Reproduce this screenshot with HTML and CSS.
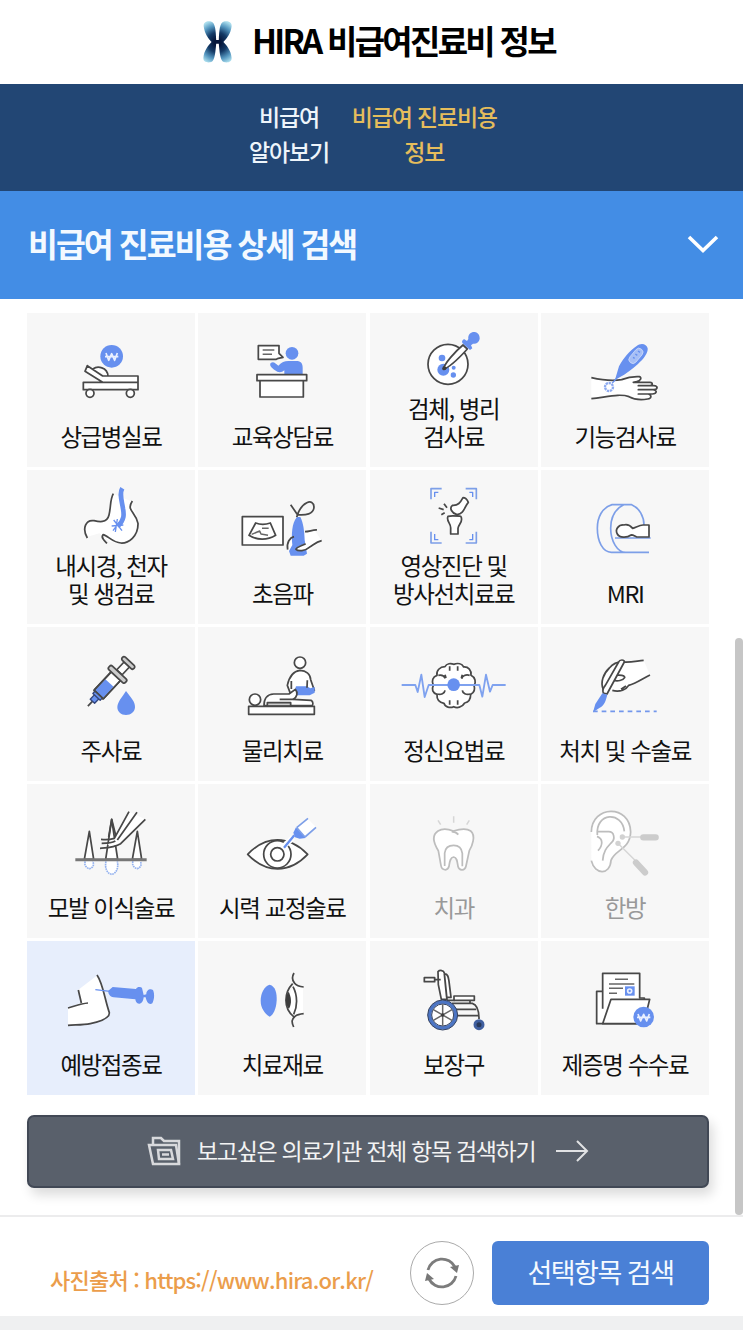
FILE: index.html
```html
<!DOCTYPE html>
<html lang="ko">
<head>
  <meta charset="UTF-8">
  <title>HIRA 비급여진료비 정보</title>
  <link rel="stylesheet" href="styles.css">
</head>
<body>
  <header class="header">
    <svg class="logo" viewBox="66 60 94 134">
      <defs>
        <radialGradient id="wing" gradientUnits="userSpaceOnUse" cx="113" cy="128" r="68">
          <stop offset="0.15" stop-color="#06163a"/>
          <stop offset="0.45" stop-color="#143a66"/>
          <stop offset="0.75" stop-color="#5496bf"/>
          <stop offset="1" stop-color="#a9dcec"/>
        </radialGradient>
      </defs>
      <g fill="url(#wing)">
        <path d="M71 80C69 65 84 62 95 65C106 69 108 92 109 121H117C118 92 120 69 131 65C142 62 158 65 156 80C153 102 142 116 131 127C142 139 154 153 156 175C157 189 143 191 132 188C121 184 119 155 117 132H109C107 155 105 184 94 188C83 191 69 189 70 175C72 153 84 139 95 127C84 116 74 102 71 80Z"/>
      </g>
    </svg>
    <h1 class="title">HIRA 비급여진료비 정보</h1>
  </header>

  <nav class="nav">
    <a class="nav-item">비급여<br>알아보기</a>
    <a class="nav-item active">비급여 진료비용<br>정보</a>
  </nav>

  <div class="banner">
    <h2 class="banner-title">비급여 진료비용 상세 검색</h2>
    <svg class="chevron" viewBox="0 0 32 20"><path d="M2 3L16 16.500L30 3"/></svg>
  </div>

  <main class="content">
    <div class="grid">
      <div class="cell">
        <svg class="icon" viewBox="21 24 504 270">
          <circle class="blue" cx="275" cy="154" r="34"/>
          <path class="won" d="M258 144L266 166L275 146L284 166L292 144M255 155H295"/>
          <path class="line" d="M219 192C232 182 262 186 264 213M202 182L248 213H354V232H248L195 199ZM190 232H354V254H190Z"/>
          <circle class="line" cx="210" cy="265" r="12"/>
          <circle class="line" cx="331" cy="265" r="12"/>
        </svg>
        <span class="label">상급병실료</span>
      </div>
      <div class="cell">
        <svg class="icon" viewBox="535 24 504 270">
          <circle class="blue" cx="817" cy="145" r="19"/>
          <path class="blue" d="M753 174C762 168 768 176 776 182C786 172 794 168 806 168H830C844 168 849 176 849 188V208H794V196C786 204 775 204 766 196C757 189 748 182 753 174Z"/>
          <path class="line" d="M716 122H778V145L790 157L776 160L770 163H716ZM712 209H861V227H712ZM721 227H851V276H721Z"/>
          <path class="thin" d="M729 135H764M729 148H757"/>
        </svg>
        <span class="label">교육상담료</span>
      </div>
      <div class="cell">
        <svg class="icon" viewBox="14 24 504 270">
          <circle class="line" cx="248" cy="178" r="60"/>
          <circle class="blue" cx="230" cy="159" r="10"/>
          <circle class="blue" cx="234" cy="194" r="18"/>
          <circle class="blue" cx="265" cy="188" r="6"/>
          <circle class="blue" cx="264" cy="210" r="8"/>
          <path class="line" d="M234 193C237 176 270 139 293 120L306 132C285 155 250 188 234 193Z"/>
          <circle class="dark" cx="237" cy="190" r="6"/>
          <path class="blue" d="M290 108L296 102L305 108L309 102C307 88 318 80 328 81C338 83 344 91 343 102C341 112 332 118 323 116L317 121L321 130L314 135L291 114Z"/>
        </svg>
        <span class="label">검체, 병리<br>검사료</span>
      </div>
      <div class="cell">
        <svg class="icon" viewBox="528 24 504 270">
          <path class="fill" d="M679 218L740 228L820 215L878 240L872 270L850 283H810L760 272L679 282Z"/>
          <path class="open" d="M679 218C710 225 745 228 770 224C790 216 805 214 823 215C831 218 828 226 815 230L805 232H855C864 233 864 241 855 242H820H866C880 243 879 253 866 254H820H864C878 256 876 266 862 267H820H850C861 270 860 281 848 282C830 285 808 284 792 275C765 265 730 275 679 281"/>
          <path class="blue" d="M750 224L762 184C775 160 795 137 814 124C827 112 845 116 848 130C850 144 835 163 819 177C800 194 782 207 764 217Z"/>
          <path class="blue-thin" d="M760 214L742 234"/>
          <rect class="blue-window" x="786" y="141" width="52" height="24" rx="12" transform="rotate(-50 812 152)"/>
          <path class="blue-thin" d="M804 157L809 160M811 147L817 151M819 138L825 142"/>
          <circle class="blue-dash" cx="732" cy="246" r="12"/>
        </svg>
        <span class="label">기능검사료</span>
      </div>

      <div class="cell">
        <svg class="icon" viewBox="21 15 504 270">
          <path class="fill" d="M279 86L337 110C334 128 353 140 354 178C350 222 315 242 270 230L238 205L202 215C185 185 202 160 252 168C272 155 262 118 279 86Z"/>
          <path class="open" d="M280 86C270 103 273 125 267 150C261 176 235 170 222 167C198 163 185 190 202 219M337 108C318 137 346 139 354 175C355 215 325 235 303 234C278 233 263 211 249 209C242 218 253 227 261 235"/>
          <path class="blue-tube" d="M307 70C297 86 306 109 309 131C312 147 314 165 293 184"/>
          <path class="blue-thin" d="M275 183L310 180M281 165L306 197M292 162L286 201M301 168L279 197"/>
        </svg>
        <span class="label">내시경, 천자<br>및 생검료</span>
      </div>
      <div class="cell">
        <svg class="icon" viewBox="535 15 504 270">
          <path class="line" d="M668 155H790V240H668Z"/>
          <path class="line" d="M708 174C723 180 738 179 752 174L768 211C742 227 712 226 688 211Z"/>
          <path class="thin" d="M696 208L720 198L724 207L745 211M727 190H747"/>
          <path class="open" d="M813 119L834 150M831 157C844 109 882 98 883 126C882 148 858 151 833 149"/>
          <path class="fill" d="M802 250C801 232 812 218 822 215L885 196L906 227L862 260H808Z"/>
          <path class="blue" d="M832 156H842C851 173 854 199 855 225L862 266L852 272H813L808 258L818 240C815 210 816 174 832 156Z"/>
          <path class="fill" d="M829 253C831 243 848 242 862 232L880 236L869 247C856 258 836 260 829 253Z"/>
          <path class="open" d="M804 254C800 232 811 218 823 215M856 200C868 200 880 194 892 195M906 227C888 231 882 240 869 247C856 258 836 260 829 253C831 245 848 242 858 236"/>
        </svg>
        <span class="label">초음파</span>
      </div>
      <div class="cell">
        <svg class="icon" viewBox="14 15 504 270">
          <path class="frame" d="M197 103V71H229M301 71H333V103M333 200V234H301M229 234H197V200"/>
          <path class="blue-thin" d="M208 96V82H219M312 82H322V96M322 207V224H312M219 224H208V207"/>
          <path class="line" d="M293 98C302 98 306 105 309 112C295 128 298 145 275 149C260 145 250 129 262 121C278 122 285 113 293 98ZM248 154C258 151 275 153 286 154C296 168 280 176 278 190V207H256V191C258 175 241 168 248 154Z"/>
          <path class="open" d="M220 129L235 134M236 116L245 128M228 149L238 143"/>
        </svg>
        <span class="label">영상진단 및<br>방사선치료료</span>
      </div>
      <div class="cell">
        <svg class="icon" viewBox="528 15 504 270">
          <path class="frame" d="M776 119H741C711 128 697 157 697 190C697 229 713 262 739 262H852M776 119C753 131 737 154 737 190C737 228 757 262 782 262M776 119H800C823 129 837 154 837 180M750 219H857"/>
          <path class="line" d="M776 180C789 176 797 183 803 190C813 187 824 180 834 180H852V216H815C808 213 804 209 798 210C786 219 763 219 757 207C749 193 761 179 776 180Z"/>
        </svg>
        <span class="label">MRI</span>
      </div>

      <div class="cell">
        <svg class="icon" viewBox="21 6 504 270">
          <g transform="translate(205 242) rotate(-47)">
            <path class="open" d="M-2 0H25"/>
            <path class="line" d="M45 -19H121V19H45ZM137 -11H169V11H137Z"/>
            <path class="blue" d="M46 -17H93V17H46Z"/>
            <path class="blue-edged" d="M18 -9H36V9H18ZM36 -15H46V15H36Z"/>
            <path class="open" d="M46 -19H121M46 19H121M46 -19V19"/>
            <rect class="line grey" x="121" y="-34" width="15" height="68" rx="6"/>
            <rect class="line grey" x="169" y="-24" width="13" height="48" rx="6"/>
          </g>
          <path class="blue" d="M318 198C332 217 346 230 345 247C344 261 333 270 318 270C303 270 292 260 292 246C293 230 306 217 318 198Z"/>
        </svg>
        <span class="label">주사료</span>
      </div>
      <div class="cell">
        <svg class="icon" viewBox="535 6 504 270">
          <circle class="line" cx="841" cy="113" r="17"/>
          <path class="line" d="M841 136C858 137 872 146 873 164L884 196L870 206L812 205L803 181C808 158 817 139 841 136Z"/>
          <path class="blue" d="M829 184H862L872 190L885 186V203L870 211H820Z"/>
          <circle class="line" cx="706" cy="224" r="17"/>
          <path class="line" d="M733 242C733 219 744 208 762 207H808L827 193C836 203 832 216 821 223L874 226C882 231 880 240 877 242Z"/>
          <path class="open" d="M815 168V192M863 166L862 188M821 223H780"/>
          <path class="line grey" d="M743 243V233H813V243Z"/>
          <path class="line" d="M687 244H884V268H687Z"/>
        </svg>
        <span class="label">물리치료</span>
      </div>
      <div class="cell">
        <svg class="icon" viewBox="14 6 504 270">
          <path class="line" d="M239 125C244 115 257 114 265 118C278 113 290 116 295 126C309 125 319 136 317 151C330 157 333 173 326 181C330 194 325 204 316 208C316 223 309 232 298 234C290 248 275 250 265 245C255 250 239 247 236 235C221 232 214 222 215 208C202 204 198 193 204 181C198 168 202 155 215 151C212 137 224 125 239 125Z"/>
          <path class="open" d="M253 124V137M277 124V137M219 151C229 149 237 153 240 160M313 151C301 147 291 153 289 161M216 207C227 210 238 205 239 196M315 207C302 210 292 205 291 196M253 226V239M277 226V239M239 149L242 159M291 149L288 159"/>
          <path class="pulse" d="M109 180H150L157 201L168 149L178 216L190 180H342L351 215L362 149L374 200L382 180H421"/>
          <circle class="blue" cx="265" cy="179" r="19"/>
        </svg>
        <span class="label">정신요법료</span>
      </div>
      <div class="cell">
        <svg class="icon" viewBox="528 6 504 270">
          <path class="fill" d="M765 116L836 106L855 150L794 180L772 198L718 195L710 160L735 124Z"/>
          <path class="open" d="M836 106C810 109 795 113 773 111C758 110 742 119 733 129C715 146 705 173 715 194M855 150C833 160 814 175 791 181C785 192 765 203 742 196M753 151C764 149 780 151 779 158C774 167 758 169 744 166M768 193L783 183"/>
          <path class="line" d="M761 111C764 103 778 103 778 111L726 207L715 204C711 195 715 188 721 181Z"/>
          <path class="blue" d="M712 205L727 209C722 228 719 240 703 249L684 262L691 237Z"/>
          <path class="cut" d="M684 259H875"/>
        </svg>
        <span class="label">처치 및 수술료</span>
      </div>

      <div class="cell">
        <svg class="icon" viewBox="21 6 504 270">
          <path class="line" d="M193 232L208 148L221 232ZM337 232L352 148L365 232ZM257 232L275 112L293 232Z"/>
          <path class="blue-dots" d="M196 238C191 250 200 258 208 260C218 258 224 249 218 238M339 238C335 250 343 258 352 260C362 257 366 248 361 238M258 238C253 261 264 276 275 277C286 276 297 261 292 238"/>
          <path class="fill" d="M327 89L376 112L301 190L262 188L285 167Z"/>
          <path class="open" d="M327 89L283 169C273 172 260 174 243 172M351 91L292 174M376 112L302 185C284 196 263 197 240 199M266 165L275 112L287 160M245 184C267 184 276 183 286 177"/>
          <path class="ground" d="M166 233H380"/>
        </svg>
        <span class="label">모발 이식술료</span>
      </div>
      <div class="cell">
        <svg class="icon" viewBox="535 6 504 270">
          <path class="line" d="M684 217C739 159 808 159 864 217C809 275 739 275 684 217Z"/>
          <circle class="line" cx="773" cy="217" r="41"/>
          <circle class="line" cx="773" cy="217" r="20"/>
          <path class="gap" d="M790 195L820 167"/>
          <path class="blue-tube narrow" d="M793 197L824 160"/>
          <path class="blue" d="M821 152L829 136L858 168L840 170L826 166Z"/>
          <path class="fill" d="M831 135L863 109L889 136L857 165Z"/>
          <path class="frame" d="M831 137L865 109M856 165L889 136M831 137L856 165"/>
        </svg>
        <span class="label">시력 교정술료</span>
      </div>
      <div class="cell disabled">
        <svg class="icon" viewBox="14 6 504 270">
          <path class="line" d="M218 147C233 138 248 141 264 147C280 142 304 138 316 147C333 161 320 193 312 206L302 252C299 267 281 267 278 253C276 240 275 226 265 225C254 226 253 240 251 253C247 268 230 266 227 251L219 206C207 187 197 161 218 147Z"/>
          <path class="open" d="M238 252V213C240 196 249 190 265 190C281 190 289 197 291 214V253M259 149C267 149 273 151 279 158"/>
          <path class="thin" d="M218 115L226 128M265 103V122M312 115L304 128"/>
        </svg>
        <span class="label">치과</span>
      </div>
      <div class="cell disabled">
        <svg class="icon" viewBox="528 6 504 270">
          <path class="fill" d="M679 148C680 70 796 65 797 150C794 202 749 202 738 238C736 278 690 278 679 250Z"/>
          <path class="open" d="M679 150C680 69 795 66 797 150C795 203 750 202 738 235C736 280 689 280 679 236M697 159C691 90 772 87 778 148M697 149H730C748 148 751 171 740 181C727 195 715 205 713 236M696 163C715 170 714 190 699 206"/>
          <path class="thin" d="M771 165H830M758 183L810 235"/>
          <circle class="dark" cx="772" cy="165" r="8"/>
          <circle class="dark" cx="759" cy="184" r="8"/>
          <path class="needle" d="M835 166H872M813 242L840 271"/>
        </svg>
        <span class="label">한방</span>
      </div>

      <div class="cell selected">
        <svg class="icon" viewBox="21 9 504 270">
          <path class="fill" d="M175 155L232 112C251 135 257 180 268 229C260 252 200 264 144 261V209L184 194Z"/>
          <path class="open" d="M231 111C249 137 253 179 268 224C269 240 239 251 211 257C188 262 162 260 144 262M144 210C163 205 181 197 204 195M175 156C178 170 181 181 184 195"/>
          <path class="blue-thin" d="M226 155L270 160"/>
          <path class="blue" d="M265 158L278 147L348 153C352 145 362 146 366 150L371 171L379 169C378 157 390 150 399 156C405 170 402 186 397 196C389 202 380 195 377 178H371C370 189 365 198 357 197C350 197 347 191 346 184L281 178C269 175 264 167 265 158Z"/>
        </svg>
        <span class="label">예방접종료</span>
      </div>
      <div class="cell">
        <svg class="icon" viewBox="535 9 504 270">
          <path class="blue" d="M750 140C768 145 772 166 771 188C769 213 762 229 750 236C735 227 723 210 723 189C723 164 734 145 750 140Z"/>
          <path class="fill" d="M821 141L850 147V228L822 235L800 197Z"/>
          <path class="open" d="M823 105C815 119 817 127 825 136C831 144 841 146 852 147M822 267C814 250 817 243 826 235C834 229 842 228 852 227M819 137C793 164 790 210 822 236M820 146C835 174 833 207 822 229"/>
          <path class="dark" d="M807 161C815 177 817 196 808 212C796 201 796 173 807 161Z"/>
        </svg>
        <span class="label">치료재료</span>
      </div>
      <div class="cell">
        <svg class="icon" viewBox="14 9 504 270">
          <path class="line" d="M177 119H208V131H177ZM218 101C224 95 235 97 237 105L245 184H228L219 140ZM237 108C249 107 249 119 251 130L257 178H244ZM266 174H327V187H266Z"/>
          <path class="open" d="M208 125H226M245 187H268M314 187V196M260 196H321C338 201 341 220 341 243M269 214H333M272 233H340"/>
          <circle class="wheel" cx="232" cy="231" r="39"/>
          <circle class="rim" cx="232" cy="231" r="45"/>
          <circle class="rim" cx="232" cy="231" r="33"/>
          <path class="thin" d="M232 199V263M204 215L260 247M204 247L260 215"/>
          <circle class="dark" cx="232" cy="231" r="5"/>
          <circle class="wheel small" cx="341" cy="260" r="12"/>
        </svg>
        <span class="label">보장구</span>
      </div>
      <div class="cell">
        <svg class="icon" viewBox="528 9 504 270">
          <path class="line" d="M712 160H695V257H838V180H824V106H713V212"/>
          <path class="line" d="M738 184H854L836 257H713Z"/>
          <path class="thin" d="M750 124H789M732 138H808M732 151H774M732 166H756"/>
          <rect class="blue" x="780" y="145" width="29" height="28"/>
          <circle class="won" cx="794" cy="159" r="6"/>
          <circle class="blue" cx="836" cy="237" r="31"/>
          <path class="won" d="M819 228L827 249L836 229L845 249L853 228M816 238H856"/>
        </svg>
        <span class="label">제증명 수수료</span>
      </div>
    </div>

    <button class="all-search">
      <svg class="folder" viewBox="0 0 36 30">
        <path d="M6 9V2H14L17 5H32V28"/>
        <path d="M2 9H29L32 28H6Z"/>
        <path d="M11 14H24L26 23H12Z"/>
        <path d="M15 18.500H22"/>
      </svg>
      <span class="all-text">보고싶은 의료기관 전체 항목 검색하기</span>
      <svg class="arrow" viewBox="0 0 34 24"><path d="M1 12H32M22 2L32 12L22 22"/></svg>
    </button>
  </main>

  <footer class="footer">
    <span class="source">사진출처 : https://www.hira.or.kr/</span>
    <button class="refresh">
      <svg viewBox="0 0 36 36">
        <path d="M4 15A14.500 14.500 0 0 1 31 12M32 21A14.500 14.500 0 0 1 5 24"/>
        <path class="head" d="M26 12L35 10L33 18ZM10 24L1 26L3 18Z"/>
      </svg>
    </button>
    <button class="submit">선택항목 검색</button>
  </footer>
  <div class="bottom-bar"></div>
  <div class="scrollbar"></div>
</body>
</html>
```

FILE: styles.css
```css
* { box-sizing: border-box; }
body {
  position: relative;
  width: 743px;
  height: 1330px;
  margin: 0;
  overflow: hidden;
  background: #fff;
  color: #111;
  font-family: "Noto Sans CJK KR", sans-serif;
}
h1, h2 { margin: 0; }
button {
  padding: 0;
  font-family: inherit;
  cursor: pointer;
}
.header {
  height: 84px;
  display: flex;
  align-items: center;
  padding-left: 202px;
}
.logo {
  width: 31px;
  height: 44px;
  margin-right: 19px;
}
.title {
  padding-bottom: 5px;
  font-size: 33px;
  font-weight: 700;
  letter-spacing: -2.7px;
  line-height: 40px;
  color: #000;
  white-space: nowrap;
}
.nav {
  height: 107px;
  padding: 15px 0 0 249px;
  display: flex;
  gap: 23px;
  background: #224674;
}
.nav-item {
  font-size: 23px;
  line-height: 35px;
  font-weight: 500;
  letter-spacing: -1.2px;
  text-align: center;
  color: #eef5fb;
  white-space: nowrap;
}
.nav-item.active { color: #e5bd5c; }
.banner {
  height: 108px;
  padding: 0 24px 0 28px;
  display: flex;
  align-items: center;
  justify-content: space-between;
  background: #438de5;
}
.banner-title {
  padding-bottom: 6px;
  font-size: 32.5px;
  font-weight: 700;
  letter-spacing: -2px;
  color: #f3f9ff;
}
.chevron {
  width: 32px;
  height: 20px;
  margin-bottom: 2px;
  fill: none;
  stroke: #fff;
  stroke-width: 3.6;
}
.content {
  height: 916px;
  padding: 14px 34px 0 27px;
}
.grid {
  display: grid;
  grid-template-columns: repeat(4, 1fr);
  grid-auto-rows: 153.5px;
  gap: 3.5px;
}
.cell {
  position: relative;
  display: flex;
  flex-direction: column;
  justify-content: flex-end;
  align-items: center;
  padding-bottom: 17px;
  background: #f7f7f7;
}
.cell.selected { background: #e7eefc; }
.label {
  font-size: 23.5px;
  line-height: 28px;
  letter-spacing: -1.4px;
  text-align: center;
  white-space: nowrap;
}
.disabled .label { color: #999; }

/* icons overlap the first line of two-line labels */
.icon {
  position: absolute;
  top: 0;
  left: 0;
  width: 168px;
  height: 90px;
  overflow: visible;
  fill: none;
  stroke-linejoin: round;
}
.icon .line { fill: #fff; stroke: #484848; stroke-width: 5.2; }
.icon .line.grey { fill: #ccc; }
.icon .open { stroke: #484848; stroke-width: 5.2; }
.icon .thin { stroke: #666; stroke-width: 4.5; }
.icon .fill { fill: #fff; }
.icon .dark { fill: #3c3c3c; }
.icon .blue { fill: #6790ef; }
.icon .blue-edged { fill: #6790ef; stroke: #33467c; stroke-width: 4; }
.icon .blue-window { fill: #a7bff5; stroke: #d7e2fb; stroke-width: 2; }
.icon .blue-thin { stroke: #6790ef; stroke-width: 4; }
.icon .blue-dash { stroke: #8eabf1; stroke-width: 7; stroke-dasharray: 7 2; }
.icon .blue-dots { stroke: #94b2ef; stroke-width: 5; stroke-dasharray: 5 2; fill: #fff; }
.icon .blue-tube { stroke: #6790ef; stroke-width: 14; }
.icon .blue-tube.narrow { stroke-width: 7; }
.icon .frame { stroke: #7d9fe8; stroke-width: 5; }
.icon .pulse { stroke: #7fa2ef; stroke-width: 5.5; }
.icon .cut { stroke: #7397ec; stroke-width: 5; stroke-dasharray: 14 12; }
.icon .ground { stroke: #777; stroke-width: 9; }
.icon .gap { stroke: #fff; stroke-width: 17; }
.icon .won { stroke: #eaf0ff; stroke-width: 5; }
.icon .wheel { fill: #fff; stroke: #4c75c4; stroke-width: 11; }
.icon .rim { stroke: #33415f; stroke-width: 3; }
.icon .wheel.small { fill: #283859; stroke: #405f9f; stroke-width: 9; }
.icon .needle { stroke: #ccc; stroke-width: 19; stroke-linecap: round; }
.disabled .icon .line,
.disabled .icon .open { stroke: #bdbdbd; }
.disabled .icon .thin { stroke: #d6d6d6; }
.disabled .icon .dark { fill: #d2d2d2; }

.all-search {
  width: 682px;
  height: 73px;
  margin-top: 20px;
  display: flex;
  align-items: center;
  padding-left: 118px;
  background: #59606b;
  border: 2px solid #414855;
  border-radius: 7px;
  box-shadow: 4px 7px 12px rgba(0,0,0,0.14);
  color: #f3f3f3;
}
.folder {
  width: 36px;
  height: 30px;
  fill: none;
  stroke: #d8d9dc;
  stroke-width: 2.5;
}
.all-text {
  margin-left: 14px;
  padding-bottom: 2px;
  font-size: 23px;
  letter-spacing: -1.3px;
  white-space: nowrap;
}
.arrow {
  width: 34px;
  height: 24px;
  margin-left: 20px;
  fill: none;
  stroke: #e1e2e4;
  stroke-width: 2;
}
.footer {
  height: 101px;
  border-top: 2px solid #ececed;
  display: flex;
  align-items: center;
  justify-content: flex-end;
  padding: 13px 34px 0 0;
}
.source {
  margin-right: 37px;
  padding-top: 11px;
  font-size: 22px;
  font-weight: 500;
  letter-spacing: -0.8px;
  color: #eb9d4b;
  white-space: nowrap;
}
.refresh {
  width: 64px;
  height: 64px;
  margin-right: 18px;
  display: flex;
  align-items: center;
  justify-content: center;
  background: #fff;
  border: 1.5px solid #aaa;
  border-radius: 50%;
}
.refresh svg {
  width: 36px;
  height: 36px;
  fill: none;
  stroke: #7c7c7c;
  stroke-width: 2.8;
}
.refresh .head { fill: #777; stroke: none; }
.submit {
  width: 217px;
  height: 64px;
  padding-bottom: 4px;
  background: #4a80d6;
  border: none;
  border-radius: 6px;
  font-size: 27px;
  letter-spacing: -1.5px;
  color: #f5faff;
}
.bottom-bar {
  height: 14px;
  background: #eff0f1;
}
.scrollbar {
  position: absolute;
  top: 638px;
  right: 0;
  width: 8px;
  height: 577px;
  background: #c6c6c6;
  border-radius: 4px;
}
```
